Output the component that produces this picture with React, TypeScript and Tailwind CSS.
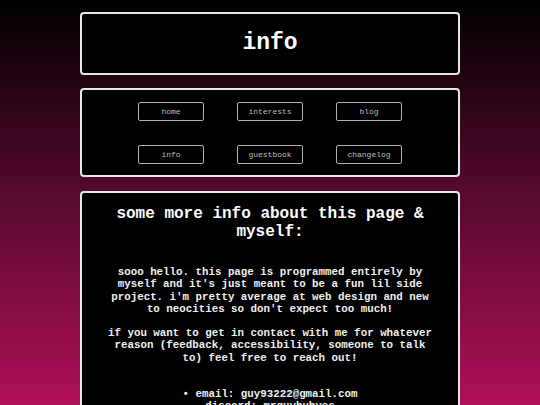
import React from "react";

const navItems = ["home", "interests", "blog", "info", "guestbook", "changelog"];

export default function App() {
  return (
    <div className="h-[405px] w-[540px] overflow-hidden bg-[linear-gradient(to_bottom,#000000_0%,#5a0a30_50%,#b01058_100%)] font-['Liberation_Mono',monospace]">
      <div className="mx-auto flex w-[380px] flex-col gap-[13px] pt-[12px]">
        <div className="flex h-[63px] items-center justify-center rounded-[4px] border-2 border-[#e6e6e6] bg-black">
          <h1 className="text-[23px] font-bold leading-[27px] text-white">info</h1>
        </div>

        <div className="mb-[1px] rounded-[4px] border-2 border-[#e6e6e6] bg-black pb-[11px] pt-[12px]">
          <div className="mx-auto grid w-[264px] grid-cols-3 gap-x-[33px] gap-y-[24px]">
            {navItems.map((n) => (
              <div
                key={n}
                className="flex h-[19px] w-[66px] items-center justify-center rounded-[2px] border border-[#b0b0b0] text-[8px] leading-none text-[#bdbdbd]"
              >
                {n}
              </div>
            ))}
          </div>
        </div>

        <div className="rounded-[4px] border-2 border-[#e6e6e6] bg-black px-[20px] pb-[20px] pt-[12px] text-center text-white">
          <h2 className="text-[16px] font-bold leading-[18px]">
            some more info about this page &amp; myself:
          </h2>
          <p className="mt-[25px] text-[10.8px] font-bold leading-[12.3px] text-[#f0f0f0]">
            sooo hello. this page is programmed entirely by myself and it's just meant to be a fun lil side project. i'm pretty average at web design and new to neocities so don't expect too much!
          </p>
          <p className="mt-[12px] text-[10.8px] font-bold leading-[12.3px] text-[#f0f0f0]">
            if you want to get in contact with me for whatever reason (feedback, accessibility, someone to talk to) feel free to reach out!
          </p>
          <ul className="mt-[24px] text-[10.8px] font-bold leading-[12.3px] text-[#f0f0f0]">
            <li>• email: guy93222@gmail.com</li>
            <li>discord: mrguyhuhyes</li>
          </ul>
        </div>
      </div>
    </div>
  );
}
